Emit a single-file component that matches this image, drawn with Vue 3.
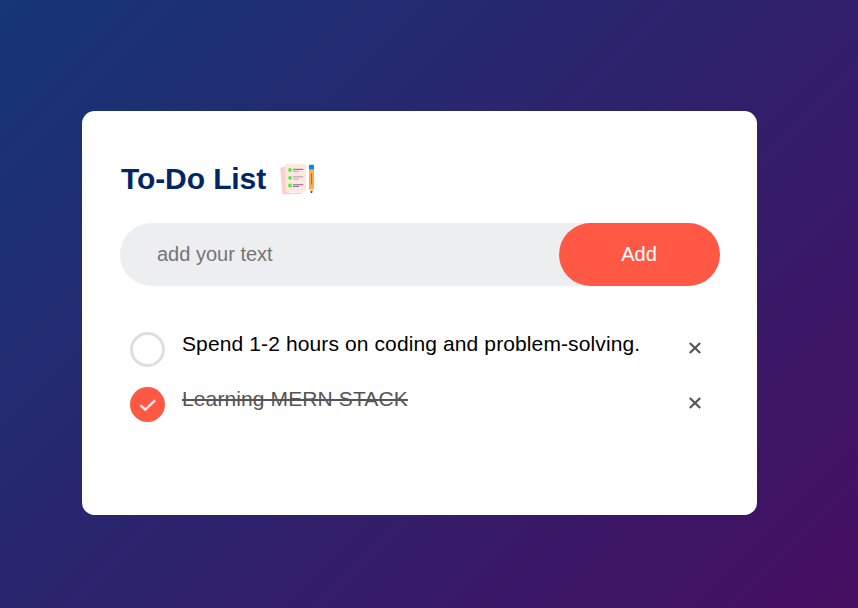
<script setup>
import { ref } from 'vue'

const draft = ref('')
const tasks = ref([
  { id: 1, text: 'Spend 1-2 hours on coding and problem-solving.', done: false },
  { id: 2, text: 'Learning MERN STACK', done: true },
])

function addTask() {
  const text = draft.value.trim()
  if (!text) return
  tasks.value.push({ id: Date.now(), text, done: false })
  draft.value = ''
}

function removeTask(id) {
  tasks.value = tasks.value.filter((task) => task.id !== id)
}
</script>

<template>
  <main class="page">
    <section class="card">
      <h2 class="title">
        <span>To-Do List</span>
        <svg class="title-icon" viewBox="0 0 36 32" aria-hidden="true">
          <path d="M2 4.2 6 3.4 9 30 22 29.5 22 30.3Q22 31 21 31L4.3 31.3Q2.6 31.3 2.4 29.8L.3 6Q.2 4.5 2 4.2Z" fill="#ffcec4" />
          <rect x="5.2" y="0.8" width="21" height="28" rx="1.8" fill="#ffe8df" />
          <g fill="#45f536">
            <circle cx="10" cy="7" r="1.9" />
            <circle cx="10" cy="14.8" r="1.9" />
            <circle cx="10" cy="22.5" r="1.9" />
          </g>
          <g fill="#89719a">
            <rect x="13" y="5.8" width="10.3" height="1.1" />
            <rect x="13" y="21.2" width="10.3" height="1.1" />
          </g>
          <g fill="#bca7b4">
            <rect x="13" y="7.8" width="6" height="1" />
            <rect x="13" y="13.2" width="10.3" height="1.2" />
            <rect x="13" y="15.5" width="6" height="1" />
          </g>
          <rect x="13" y="23" width="6" height="1" fill="#89719a" />
          <path d="M29 6.4h5v19.5l-1.7 3.3h-1.6L29 25.9Z" fill="#ffad46" />
          <path d="M29.2 26h4.6l-1.5 3.4h-1.6Z" fill="#f7d0c0" />
          <path d="M30.5 28.2h2l-.5 1.8h-1Z" fill="#423747" />
          <rect x="31" y="10.5" width="1.1" height="11" fill="#a97440" />
          <rect x="29" y="1.8" width="5" height="4.8" rx=".6" fill="#0784f7" />
        </svg>
      </h2>

      <form class="entry" @submit.prevent="addTask">
        <input v-model="draft" class="entry-input" type="text" placeholder="add your text" />
        <button class="entry-button" type="submit">Add</button>
      </form>

      <ul class="tasks">
        <li v-for="task in tasks" :key="task.id" class="task" :class="{ done: task.done }" @click="task.done = !task.done">
          <span class="mark">
            <svg v-if="task.done" class="check" viewBox="0 0 35 35" aria-hidden="true">
              <path d="M10.4 18.2 15.3 22.6 25 13.4" />
            </svg>
          </span>
          <span class="label">{{ task.text }}</span>
          <button class="remove" type="button" aria-label="Remove" @click.stop="removeTask(task.id)">
            <svg class="cross" viewBox="0 0 12 12" aria-hidden="true">
              <path d="M.8 1 11.2 11M11.2 1 .8 11" />
            </svg>
          </button>
        </li>
      </ul>
    </section>
  </main>
</template>

<style>
body {
  margin: 0;
}
</style>

<style scoped>
.page {
  box-sizing: border-box;
  min-height: 608px;
  padding: 111px 101px 93px 82px;
  background: linear-gradient(135deg, #153677, #460e61);
  font-family: "Liberation Sans", Arial, sans-serif;
}
.card {
  box-sizing: border-box;
  height: 404px;
  padding: 50px 37px 0 38px;
  border-radius: 12.5px;
  background: #fff;
}
.title {
  display: flex;
  align-items: center;
  height: 36px;
  margin: 0 0 26px;
  padding-left: 1px;
  color: #002765;
  font-size: 30px;
  line-height: 36px;
  letter-spacing: -0.1px;
}
.title-icon {
  width: 36px;
  height: 32px;
  margin-left: 13.5px;
}
.entry {
  display: flex;
  height: 63px;
  border-radius: 32px;
  background: #edeef0;
}
.entry-input {
  flex: 1;
  min-width: 0;
  padding: 0 0 1px 37px;
  border: 0;
  outline: 0;
  background: transparent;
  font: 20px "Liberation Sans", Arial, sans-serif;
}
.entry-input::placeholder {
  color: #757575;
}
.entry-button {
  width: 161px;
  padding: 0 1px 1px 0;
  border: 0;
  border-radius: 32px;
  background: #ff5945;
  color: #fff;
  font: 20px "Liberation Sans", Arial, sans-serif;
}
.tasks {
  margin: 38px 0 0;
  padding: 0;
  list-style: none;
}
.task {
  display: flex;
  height: 55px;
  padding: 0 19px 0 10px;
  box-sizing: border-box;
  font-size: 21px;
  line-height: 24px;
  letter-spacing: 0.115px;
}
.mark {
  box-sizing: border-box;
  width: 35px;
  height: 35px;
  margin: 8px 17px 0 0;
  border: 3px solid #dedede;
  border-radius: 50%;
}
.label {
  flex: 1;
  padding-top: 8px;
  white-space: nowrap;
}
.done .mark {
  border: 0;
  background: #ff5945;
}
.done .label {
  color: #555;
  text-decoration: line-through 2px;
}
.check {
  display: block;
  fill: none;
  stroke: #ffeeec;
  stroke-width: 2.4;
}
.remove {
  height: 12px;
  margin: 18px 0 0;
  padding: 0 0.5px 0 0;
  border: 0;
  background: none;
}
.cross {
  display: block;
  width: 12px;
  height: 12px;
  fill: none;
  stroke: #555;
  stroke-width: 2.2;
}
</style>
